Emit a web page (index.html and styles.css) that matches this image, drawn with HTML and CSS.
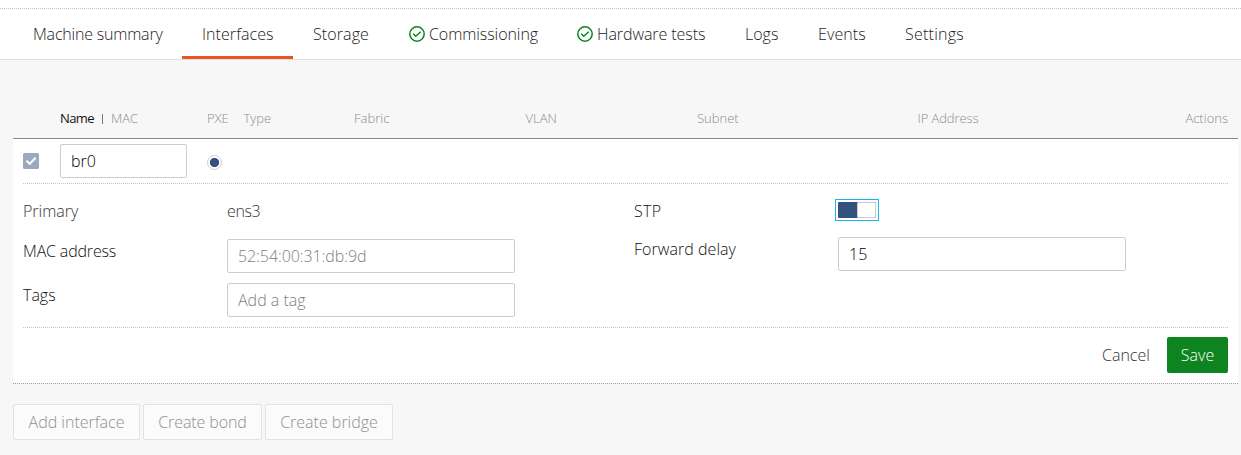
FILE: index.html
```html
<!DOCTYPE html>
<html lang="en">
<head>
<meta charset="utf-8">
<title>Interfaces</title>
<link rel="stylesheet" href="styles.css">
</head>
<body>
<header class="header">
  <nav class="tabs">
    <a class="tab tab-summary">Machine summary</a>
    <a class="tab tab-interfaces is-active">Interfaces</a>
    <a class="tab tab-storage">Storage</a>
    <a class="tab tab-wide"><svg class="tick" viewBox="0 0 16 16"><circle cx="8" cy="8" r="7.2"/><path d="M4.2 7.7l2.6 2.6 5-4.6"/></svg><span>Commissioning</span></a>
    <a class="tab tab-wide tab-tests"><svg class="tick" viewBox="0 0 16 16"><circle cx="8" cy="8" r="7.2"/><path d="M4.2 7.7l2.6 2.6 5-4.6"/></svg><span>Hardware tests</span></a>
    <a class="tab tab-logs">Logs</a>
    <a class="tab tab-events">Events</a>
    <a class="tab tab-settings">Settings</a>
  </nav>
</header>
<main class="content">
  <div class="columns">
    <div class="col-name"><span class="sorted">Name</span><i class="divider"></i><span>MAC</span></div>
    <div class="col-pxe">PXE</div>
    <div class="col-type">Type</div>
    <div class="col-fabric">Fabric</div>
    <div class="col-vlan">VLAN</div>
    <div class="col-subnet">Subnet</div>
    <div class="col-ip">IP Address</div>
    <div class="col-actions">Actions</div>
  </div>
  <section class="panel">
    <div class="device">
      <svg class="checkbox" viewBox="0 0 16 16"><rect width="16" height="16" rx="1.5"/><path d="M3.4 7.6l3.3 3.2 6-6"/></svg>
      <div class="field field-name">br0</div>
      <span class="radio"></span>
    </div>
    <div class="form">
      <div class="form-left">
        <div class="row row-primary"><span class="label muted">Primary</span><span class="value muted">ens3</span></div>
        <div class="row"><span class="label label-mac">MAC address</span><div class="field placeholder mac">52:54:00:31:db:9d</div></div>
        <div class="row"><span class="label">Tags</span><div class="field placeholder tag">Add a tag</div></div>
      </div>
      <div class="form-right">
        <div class="row row-stp"><span class="label label-stp">STP</span><span class="switch"><i class="switch-track"><i class="switch-knob"></i></i></span></div>
        <div class="row"><span class="label label-delay">Forward delay</span><div class="field delay">15</div></div>
      </div>
    </div>
    <div class="form-actions">
      <span class="cancel">Cancel</span>
      <span class="save">Save</span>
    </div>
  </section>
  <div class="buttons">
    <span class="button button-interface">Add interface</span>
    <span class="button button-bond">Create bond</span>
    <span class="button button-bridge">Create bridge</span>
  </div>
</main>
</body>
</html>
```
FILE: styles.css
```css
* { box-sizing: border-box; }
body {
  margin: 0;
  height: 455px;
  overflow: hidden;
  background: #f7f7f7;
  color: #111;
  font: 330 16px/24px "Open Sans", "Noto Sans", sans-serif;
  font-stretch: 89%;
  white-space: nowrap;
}
.header { height: 60px; padding-top: 8px; background: #fff; border-bottom: 1px solid #e0e0e0; }
.tabs { display: flex; height: 51px; padding-left: 13px; border-top: 1px dotted #c4c4c4; color: #222; }
.tab { display: flex; align-items: flex-start; flex: none; height: 50px; padding: 13px 0 0 20px; }
.tab.is-active { border-bottom: 3px solid #e95420; }
.tab-summary { width: 169px; letter-spacing: -0.2px; }
.tab-interfaces { width: 111px; letter-spacing: 0.06px; }
.tab-storage { width: 96px; letter-spacing: 0.1px; }
.tab-wide { width: 168px; letter-spacing: -0.07px; }
.tab-logs { width: 73px; }
.tab-events { width: 87px; letter-spacing: 0.1px; }
.tab-settings { width: 99px; letter-spacing: 0.25px; }
.tick { width: 16px; height: 16px; margin: 4px 4px 0 0; fill: none; stroke: #0e8420; stroke-width: 1.5; }
.content { padding: 46px 3px 0 13px; }
.columns {
  display: grid;
  grid-template-columns: 147px 36.5px 110.5px 171.5px 171.5px 220.5px 200px 1fr;
  height: 33px;
  padding: 0 10px 0 47px;
  border-bottom: 1px solid #888;
  color: #8c8c8c;
  font-size: 13px;
}
.col-name { display: flex; align-items: flex-start; }
.sorted { width: 41px; color: #111; font-weight: 400; letter-spacing: -0.6px; }
.divider { width: 1px; height: 10px; margin: 8px 8px 0 1px; background: #777; }
.col-ip { letter-spacing: -0.1px; }
.col-actions { text-align: right; }
.panel { height: 245px; padding: 0 10px; background: #fff; border-bottom: 1px dotted #999; }
.device { display: flex; height: 45px; padding-top: 5px; border-bottom: 1px dotted #c4c4c4; }
.checkbox { width: 16px; height: 16px; margin: 9px 21px 0 0; fill: #9aa9bf; }
.checkbox path { fill: none; stroke: #fff; stroke-width: 2; }
.field { height: 34px; padding: 4px 10px; border: 1px solid #cdcdcd; border-radius: 2px; background: #fff; color: #000; }
.field-name { width: 127px; }
.radio { width: 15px; height: 15px; margin: 11px 0 0 20px; border: 1px solid #cdcdcd; border-radius: 50%; background: radial-gradient(circle, #335280 4.3px, #fff 4.9px); }
.form { display: flex; height: 144px; border-bottom: 1px dotted #c4c4c4; }
.form-left { width: 611px; padding-top: 15px; }
.form-right { width: 492px; padding-top: 15px; }
.row { display: flex; height: 44px; }
.label { width: 204px; }
.label-mac { letter-spacing: -0.17px; }
.label-stp { letter-spacing: 0.3px; }
.label-delay { letter-spacing: 0.05px; }
.row .field { width: 288px; }
.row .mac { letter-spacing: -0.08px; }
.value { letter-spacing: -0.4px; }
.row-primary { height: 40px; }
.row-stp { height: 38px; }
.muted { color: #333; }
.row .placeholder { color: #808080; }
.switch { width: 44px; height: 22px; margin-left: -3px; padding: 2px; border: 1px solid #19b6ee; }
.switch-track { display: block; width: 38px; height: 16px; padding-left: 19px; border-radius: 1px; background: #335280; }
.switch-knob { display: block; height: 16px; border: 1px solid #cdcdcd; border-radius: 1px; background: #fff; }
.form-actions { display: flex; justify-content: flex-end; padding-top: 9px; color: #333; line-height: 36px; }
.cancel { width: 65px; }
.save { width: 61px; height: 36px; border-radius: 2px; background: #0e8420; color: #fff; text-align: center; }
.buttons { display: flex; gap: 3px; margin-top: 20px; color: #909090; line-height: 34px; text-align: center; }
.button { height: 36px; border: 1px solid #e2e2e2; border-radius: 2px; background: #fbfbfb; }
.button-interface { width: 127px; }
.button-bond { width: 119px; letter-spacing: -0.1px; }
.button-bridge { width: 128px; }
```
